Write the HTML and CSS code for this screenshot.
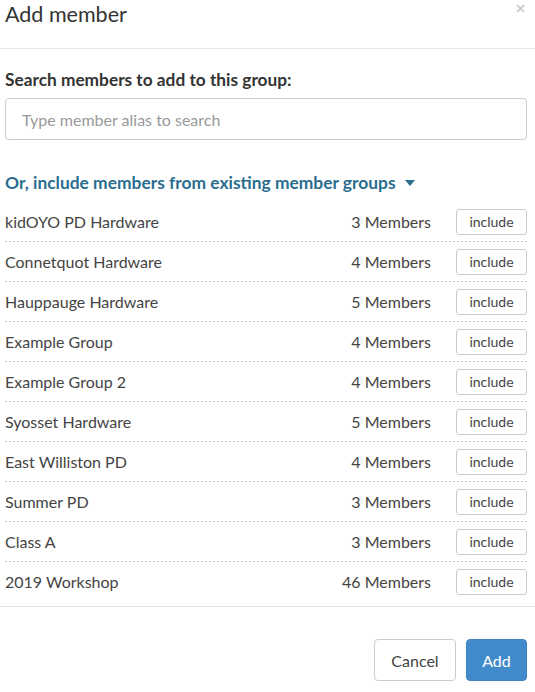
FILE: index.html
```html
<!DOCTYPE html>
<html>
<head>
<meta charset="utf-8">
<link rel="stylesheet" href="styles.css">
</head>
<body>
<div class="modal">
  <div class="modal-header">
    <h4 class="title">Add member</h4>
    <svg class="close" width="9" height="9" viewBox="0 0 9 9"><path d="M1 1 L8 8 M8 1 L1 8" stroke="#c4c4c4" stroke-width="1.6" fill="none"/></svg>
  </div>
  <div class="modal-body">
    <label class="search-label">Search members to add to this group:</label>
    <div class="input">Type member alias to search</div>
    <div class="groups-link">Or, include members from existing member groups <span class="caret"></span></div>
    <ul class="groups">
      <li class="row"><span class="name">kidOYO PD Hardware</span><span class="count">3 Members</span><button class="btn-include">include</button></li>
      <li class="row"><span class="name">Connetquot Hardware</span><span class="count">4 Members</span><button class="btn-include">include</button></li>
      <li class="row"><span class="name">Hauppauge Hardware</span><span class="count">5 Members</span><button class="btn-include">include</button></li>
      <li class="row"><span class="name">Example Group</span><span class="count">4 Members</span><button class="btn-include">include</button></li>
      <li class="row"><span class="name">Example Group 2</span><span class="count">4 Members</span><button class="btn-include">include</button></li>
      <li class="row"><span class="name">Syosset Hardware</span><span class="count">5 Members</span><button class="btn-include">include</button></li>
      <li class="row"><span class="name">East Williston PD</span><span class="count">4 Members</span><button class="btn-include">include</button></li>
      <li class="row"><span class="name">Summer PD</span><span class="count">3 Members</span><button class="btn-include">include</button></li>
      <li class="row"><span class="name">Class A</span><span class="count">3 Members</span><button class="btn-include">include</button></li>
      <li class="row"><span class="name">2019 Workshop</span><span class="count">46 Members</span><button class="btn-include">include</button></li>
    </ul>
  </div>
  <div class="modal-footer">
    <button class="btn btn-cancel">Cancel</button>
    <button class="btn btn-add">Add</button>
  </div>
</div>
</body>
</html>
```
FILE: styles.css
```css
* { box-sizing: border-box; }
html, body { margin: 0; padding: 0; background: #fff; }
body {
  font-family: "Lato", "Open Sans", sans-serif;
  color: #333;
  width: 535px;
}
.modal-header {
  position: relative;
  height: 49px;
  border-bottom: 1px solid #e5e5e5;
  padding: 0 8px 0 5px;
}
.title {
  margin: 0;
  font-weight: 400;
  font-size: 21.5px;
  line-height: 28px;
  color: #333;
}
.close {
  position: absolute;
  left: 516px;
  top: 4px;
}
.modal-body {
  padding: 22px 8px 0 5px;
}
.search-label {
  display: block;
  font-weight: 700;
  font-size: 17.3px;
  line-height: 18px;
  color: #333;
}
.input {
  margin-top: 9px;
  height: 42px;
  border: 1px solid #ccc;
  border-radius: 4px;
  padding: 0 16px;
  display: flex;
  align-items: center;
  font-size: 16px;
  color: #999;
}
.groups-link {
  margin-top: 34px;
  font-weight: 700;
  font-size: 17.4px;
  line-height: 18px;
  color: #2a6d8e;
  display: flex;
  align-items: center;
}
.caret {
  display: inline-block;
  margin-left: 9px;
  width: 0; height: 0;
  border-left: 5px solid transparent;
  border-right: 5px solid transparent;
  border-top: 6px solid #2a6d8e;
}
.groups {
  list-style: none;
  margin: 10px 0 0;
  padding: 0;
}
.row {
  display: flex;
  align-items: center;
  height: 40px;
  padding-bottom: 1px;
  background-image: linear-gradient(to right, #c4c4c4 50%, transparent 50%);
  background-size: 4px 1px;
  background-repeat: repeat-x;
  background-position: left bottom;
  font-size: 16px;
  color: #444;
}
.row:last-child { background-image: none; }
.name { flex: 1; }
.count { margin-right: 25px; }
.btn-include {
  width: 71px;
  height: 26px;
  border: 1px solid #ccc;
  border-radius: 3px;
  background: #fff;
  font-family: inherit;
  font-size: 14px;
  color: #444;
  padding: 0;
}
.modal-footer {
  margin-top: 4px;
  border-top: 1px solid #e5e5e5;
  padding: 32px 8px 0 5px;
  display: flex;
  justify-content: flex-end;
  gap: 10px;
}
.btn {
  height: 42px;
  border-radius: 4px;
  font-family: inherit;
  font-size: 16px;
  padding: 0 15px;
}
.btn-cancel {
  width: 82px;
  background: #fff;
  border: 1px solid #ccc;
  color: #444;
}
.btn-add {
  width: 61px;
  background: #428bca;
  border: 1px solid #3d85c4;
  color: #fff;
}
```
